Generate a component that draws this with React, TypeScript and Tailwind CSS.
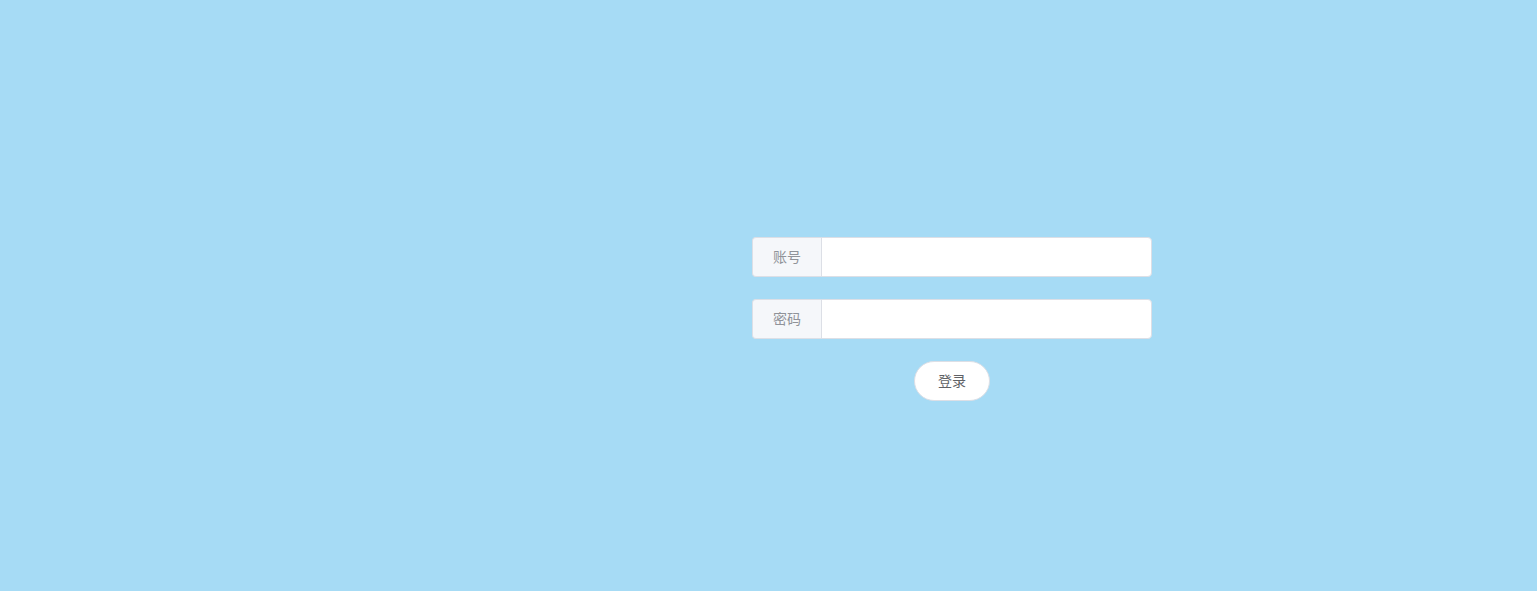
import React, { useState } from 'react';

export default function App() {
    const [user, setUser] = useState('');
    const [pass, setPass] = useState('');

    return (
        <div className="min-h-screen w-full bg-[#a6dbf5] pt-[237px] pl-[752px] font-['Helvetica_Neue','Noto_Sans_CJK_SC',sans-serif] text-[14px]">
            <div className="w-[400px] flex flex-col gap-[22px]">
                {/* 账号 */}
                <div className="flex h-[40px]">
                    <div className="w-[69px] shrink-0 flex items-center justify-center pb-[1px] bg-[#f5f7fa] border border-[#dcdfe6] border-r-0 rounded-l-[4px] text-[#909399]">
                        账号
                    </div>
                    <input
                        value={user}
                        onChange={(e) => setUser(e.target.value)}
                        className="flex-1 min-w-0 bg-white border border-[#dcdfe6] rounded-r-[4px] px-[15px] text-[#606266] outline-none"
                    />
                </div>

                {/* 密码 */}
                <div className="flex h-[40px]">
                    <div className="w-[69px] shrink-0 flex items-center justify-center pb-[1px] bg-[#f5f7fa] border border-[#dcdfe6] border-r-0 rounded-l-[4px] text-[#909399]">
                        密码
                    </div>
                    <input
                        type="password"
                        value={pass}
                        onChange={(e) => setPass(e.target.value)}
                        className="flex-1 min-w-0 bg-white border border-[#dcdfe6] rounded-r-[4px] px-[15px] text-[#606266] outline-none"
                    />
                </div>

                <div className="flex justify-center">
                    <button className="h-[40px] w-[76px] pb-[2px] rounded-[20px] bg-white border border-[#dcdfe6] text-[#606266] leading-none">
                        登录
                    </button>
                </div>
            </div>
        </div>
    );
}
